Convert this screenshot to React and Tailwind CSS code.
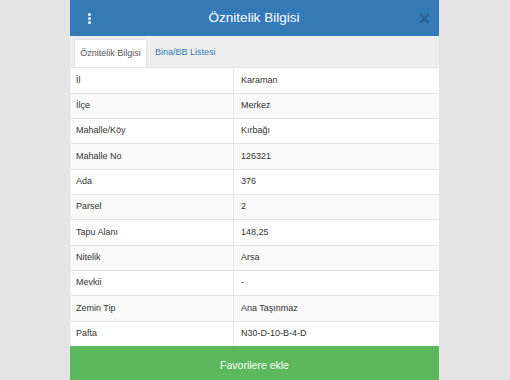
import React from "react";

const rows = [
  ["İl", "Karaman"],
  ["İlçe", "Merkez"],
  ["Mahalle/Köy", "Kırbağı"],
  ["Mahalle No", "126321"],
  ["Ada", "376"],
  ["Parsel", "2"],
  ["Tapu Alanı", "148,25"],
  ["Nitelik", "Arsa"],
  ["Mevkii", "-"],
  ["Zemin Tip", "Ana Taşınmaz"],
  ["Pafta", "N30-D-10-B-4-D"],
];

const App = () => {
  return (
    <div
      className="w-[510px] h-[380px] overflow-hidden bg-[#e4e4e4] flex justify-center"
      style={{ fontFamily: '"Liberation Sans", Arial, sans-serif' }}
    >
      <div className="w-[369px] ml-[-1px] h-full flex flex-col bg-[#eeeeee]">
        {/* header */}
        <div className="h-[36px] shrink-0 bg-[#337ab7] flex items-center pl-[16px] pr-[10px] text-white">
          <div className="w-[6px] flex flex-col items-center gap-[1px]">
            <span className="w-[3px] h-[3px] rounded-full bg-white" />
            <span className="w-[3px] h-[3px] rounded-full bg-white" />
            <span className="w-[3px] h-[3px] rounded-full bg-white" />
          </div>
          <div className="flex-1 text-center text-[13.5px] leading-none pr-[4px]">Öznitelik Bilgisi</div>
          <svg width="9" height="9" viewBox="0 0 9 9" className="mt-[1px]">
            <path d="M1 1L8 8M8 1L1 8" stroke="#2a5f90" strokeWidth="2.2" strokeLinecap="round" />
          </svg>
        </div>

        {/* tabs */}
        <div className="h-[31.3px] shrink-0 flex items-end pl-[4px] text-[9px] whitespace-nowrap">
          <div className="h-[28.3px] w-[73px] bg-white border border-b-0 border-[#e2e2e2] rounded-t-[2px] flex items-center justify-center text-[#555]">
            Öznitelik Bilgisi
          </div>
          <div className="h-[28.3px] pl-[8px] flex items-center text-[#337ab7]">Bina/BB Listesi</div>
        </div>

        {/* table */}
        <div className="flex flex-col text-[9px] text-[#333] pl-[1px]">
          {rows.map(([k, v], i) => (
            <div
              key={k}
              className={`h-[25.33px] flex border-t border-[#e3e3e3] ${i % 2 === 1 ? "bg-[#f9f9f9]" : "bg-white"}`}
            >
              <div className="w-[163px] pl-[5px] flex items-center border-r border-[#e6e6e6]">{k}</div>
              <div className="flex-1 pl-[7px] flex items-center">{v}</div>
            </div>
          ))}
        </div>

        {/* button */}
        <div className="h-[34px] shrink-0 bg-[#5cb85c] flex items-center justify-center text-white text-[10.5px] pt-[5px]">
          Favorilere ekle
        </div>
      </div>
    </div>
  );
};

export default App;
